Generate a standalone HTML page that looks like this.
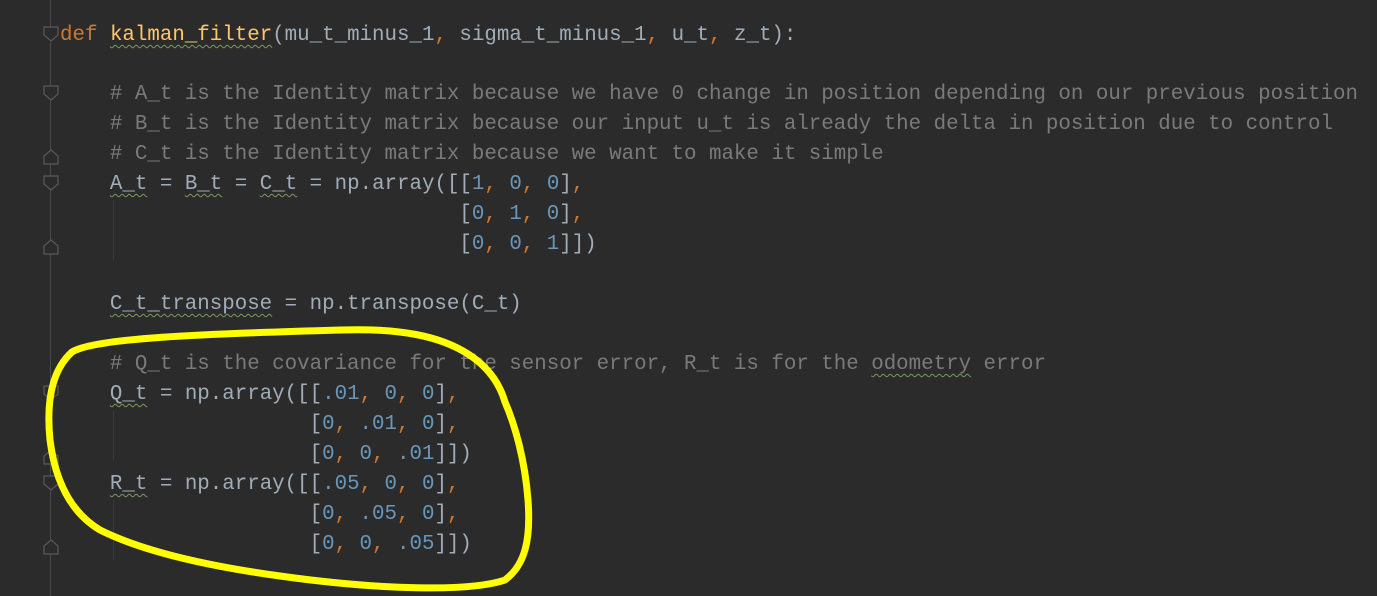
<!DOCTYPE html>
<html><head><meta charset="utf-8"><style>
html,body{margin:0;padding:0;width:1377px;height:596px;overflow:hidden;background:#2b2b2b}
.l{position:absolute;left:60px;height:30px;line-height:30px;font-family:"Liberation Mono",monospace;font-size:20.8px;color:#a0adb9;white-space:pre}
.k{color:#cc7832}.f{color:#ffc66d}.c{color:#7a7a7a}.n{color:#6897bb}.o{color:#cc7832}
.u{text-decoration:underline wavy #7a9a5a;text-decoration-thickness:1px;text-underline-offset:4px}
</style></head><body>
<div style="position:absolute;left:50px;top:0;width:1px;height:596px;background:#4a4a4a"></div>
<div style="position:absolute;left:113px;top:200px;width:1px;height:60px;background:#3a3a3a"></div>
<div style="position:absolute;left:113px;top:410px;width:1px;height:50px;background:#3a3a3a"></div>
<div style="position:absolute;left:113px;top:500px;width:1px;height:60px;background:#3a3a3a"></div>
<svg style="position:absolute;left:0;top:0" width="1377" height="596">
<g fill="#2b2b2b" stroke="#5a5a5a" stroke-width="1.2">
<path d="M44 27h14v8l-7 6l-7-6z"/><path d="M44 86h14v8l-7 6l-7-6z"/>
<path d="M44 164v-8l7-6l7 6v8z"/><path d="M44 176h14v8l-7 6l-7-6z"/>
<path d="M44 254v-8l7-6l7 6v8z"/><path d="M44 386h14v8l-7 6l-7-6z"/>
<path d="M44 464v-8l7-6l7 6v8z"/><path d="M44 476h14v8l-7 6l-7-6z"/>
<path d="M44 554v-8l7-6l7 6v8z"/>
</g>
</svg>
<div class="l" style="top:21px"><span class="k">def</span> <span class="f u">kalman_filter</span>(mu_t_minus_1<span class="o">,</span> sigma_t_minus_1<span class="o">,</span> u_t<span class="o">,</span> z_t):</div>
<div class="l c" style="top:80px">    # A_t is the Identity matrix because we have 0 change in position depending on our previous position</div>
<div class="l c" style="top:110px">    # B_t is the Identity matrix because our input u_t is already the delta in position due to control</div>
<div class="l c" style="top:140px">    # C_t is the Identity matrix because we want to make it simple</div>
<div class="l" style="top:170px">    <span class="u">A_t</span> = <span class="u">B_t</span> = <span class="u">C_t</span> = np.array([[<span class="n">1</span><span class="o">,</span> <span class="n">0</span><span class="o">,</span> <span class="n">0</span>]<span class="o">,</span></div>
<div class="l" style="top:200px">                                [<span class="n">0</span><span class="o">,</span> <span class="n">1</span><span class="o">,</span> <span class="n">0</span>]<span class="o">,</span></div>
<div class="l" style="top:230px">                                [<span class="n">0</span><span class="o">,</span> <span class="n">0</span><span class="o">,</span> <span class="n">1</span>]])</div>
<div class="l" style="top:290px">    <span class="u">C_t_transpose</span> = np.transpose(C_t)</div>
<div class="l c" style="top:350px">    # Q_t is the covariance for the sensor error, R_t is for the <span class="u">odometry</span> error</div>
<div class="l" style="top:380px">    <span class="u">Q_t</span> = np.array([[<span class="n">.01</span><span class="o">,</span> <span class="n">0</span><span class="o">,</span> <span class="n">0</span>]<span class="o">,</span></div>
<div class="l" style="top:410px">                    [<span class="n">0</span><span class="o">,</span> <span class="n">.01</span><span class="o">,</span> <span class="n">0</span>]<span class="o">,</span></div>
<div class="l" style="top:440px">                    [<span class="n">0</span><span class="o">,</span> <span class="n">0</span><span class="o">,</span> <span class="n">.01</span>]])</div>
<div class="l" style="top:470px">    <span class="u">R_t</span> = np.array([[<span class="n">.05</span><span class="o">,</span> <span class="n">0</span><span class="o">,</span> <span class="n">0</span>]<span class="o">,</span></div>
<div class="l" style="top:500px">                    [<span class="n">0</span><span class="o">,</span> <span class="n">.05</span><span class="o">,</span> <span class="n">0</span>]<span class="o">,</span></div>
<div class="l" style="top:530px">                    [<span class="n">0</span><span class="o">,</span> <span class="n">0</span><span class="o">,</span> <span class="n">.05</span>]])</div>
<svg style="position:absolute;left:0;top:0" width="1377" height="596">
<path d="M72 352 C95 338 200 334 340 330 C400 328 440 336 468 354 C490 368 500 385 505 402 C515 425 525 460 528 500 C531 540 525 565 505 580 C470 592 380 590 280 576 C200 565 140 550 100 530 C70 512 55 480 50 440 C46 400 52 370 72 352 Z" fill="none" stroke="#ffff00" stroke-width="7" stroke-linejoin="round"/>
</svg>
</body></html>
